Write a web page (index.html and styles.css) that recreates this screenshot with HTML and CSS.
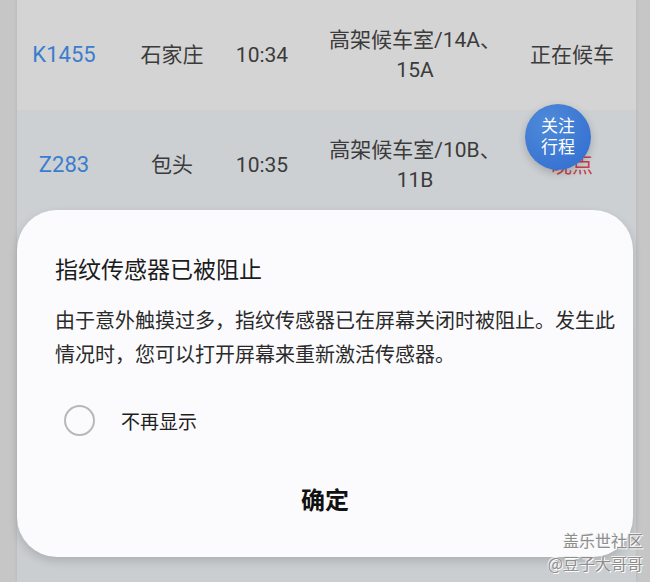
FILE: index.html
```html
<!DOCTYPE html>
<html lang="zh-CN">
<head>
    <meta charset="UTF-8">
    <meta name="viewport" content="width=device-width, initial-scale=1.0">
    <title>候车信息</title>
    <link rel="stylesheet" href="styles.css">
</head>
<body>

    <div class="screen">
        <div class="list">
            <div class="row row-a">
                <div class="cell train">K1455</div>
                <div class="cell">石家庄</div>
                <div class="cell">10:34</div>
                <div class="cell gate">高架候车室/14A、<br>15A</div>
                <div class="cell">正在候车</div>
            </div>
            <div class="row row-b">
                <div class="cell train">Z283</div>
                <div class="cell">包头</div>
                <div class="cell">10:35</div>
                <div class="cell gate">高架候车室/10B、<br>11B</div>
                <div class="cell late">晚点</div>
            </div>
            <div class="row row-b"></div>
        </div>

        <div class="fab">关注<br>行程</div>

        <div class="dialog">
            <h2 class="dialog-title">指纹传感器已被阻止</h2>
            <p class="dialog-text">由于意外触摸过多，指纹传感器已在屏幕关闭时被阻止。发生此情况时，您可以打开屏幕来重新激活传感器。</p>
            <label class="check">
                <span class="radio"></span>
                <span>不再显示</span>
            </label>
            <div class="dialog-btn">确定</div>
        </div>

        <div class="watermark">盖乐世社区<br>@豆子大哥哥</div>
    </div>

</body>
</html>
```

FILE: styles.css
```css
body {
    margin: 0;
    background: #c6c6c6;
    font-family: Roboto, "Noto Sans CJK SC", sans-serif;
}

.screen {
    position: relative;
    width: 650px;
    height: 582px;
    overflow: hidden;
}

.list {
    margin-left: 17px;
    width: 619px;
    height: 582px;
    background: #cbced1;
    box-shadow: 0 0 4px rgba(0, 0, 0, 0.08);
}

.row {
    display: grid;
    grid-template-columns: 94px 122px 58px 248px 66px;
    align-items: center;
    height: 110px;
    font-size: 21px;
    line-height: 30px;
    color: #3b3b3b;
}

.row-a {
    background: #d4d4d4;
}

.row-b {
    background: #cdd0d3;
}

.cell {
    display: flex;
    justify-content: center;
    text-align: center;
    white-space: nowrap;
}

.train {
    color: #3a7dcf;
    font-size: 22px;
}

.late {
    color: #c8404a;
}

.fab {
    position: absolute;
    left: 525px;
    top: 104px;
    width: 66px;
    height: 66px;
    border-radius: 50%;
    background: radial-gradient(circle at 35% 30%, #4f8ad9, #2f6ccf);
    box-shadow: 0 3px 8px rgba(0, 0, 0, 0.2);
    color: white;
    font-size: 17px;
    line-height: 21px;
    display: flex;
    align-items: center;
    justify-content: center;
    text-align: center;
}

.dialog {
    position: absolute;
    left: 17px;
    top: 210px;
    width: 616px;
    height: 347px;
    box-sizing: border-box;
    padding: 42px 8px 0 38px;
    background: #fbfbfd;
    border-radius: 40px;
    box-shadow: 0 4px 10px rgba(0, 0, 0, 0.15);
    font-family: "Noto Sans CJK SC", sans-serif;
}

.dialog-title {
    margin: 0;
    font-size: 23px;
    line-height: 32px;
    font-weight: normal;
    color: #1c1c1c;
}

.dialog-text {
    margin: 19px 0 0;
    font-size: 20px;
    line-height: 34px;
    color: #2a2a2a;
}

.check {
    display: flex;
    align-items: center;
    gap: 26px;
    height: 48px;
    margin: 25px 0 0 9px;
    font-size: 19px;
    color: #1e1e1e;
}

.radio {
    width: 27px;
    height: 27px;
    border: 2px solid #b8b8b8;
    border-radius: 50%;
}

.dialog-btn {
    margin: 35px 0 0 -30px;
    text-align: center;
    font-size: 24px;
    line-height: 40px;
    font-weight: bold;
    color: #111;
}

.watermark {
    position: absolute;
    right: 7px;
    bottom: 7px;
    text-align: right;
    font-family: "Noto Sans CJK SC", sans-serif;
    font-size: 16px;
    line-height: 23px;
    color: #8e8e8e;
    text-shadow: 1px 1px 0 #fff, -1px -1px 0 #eee;
}
```
